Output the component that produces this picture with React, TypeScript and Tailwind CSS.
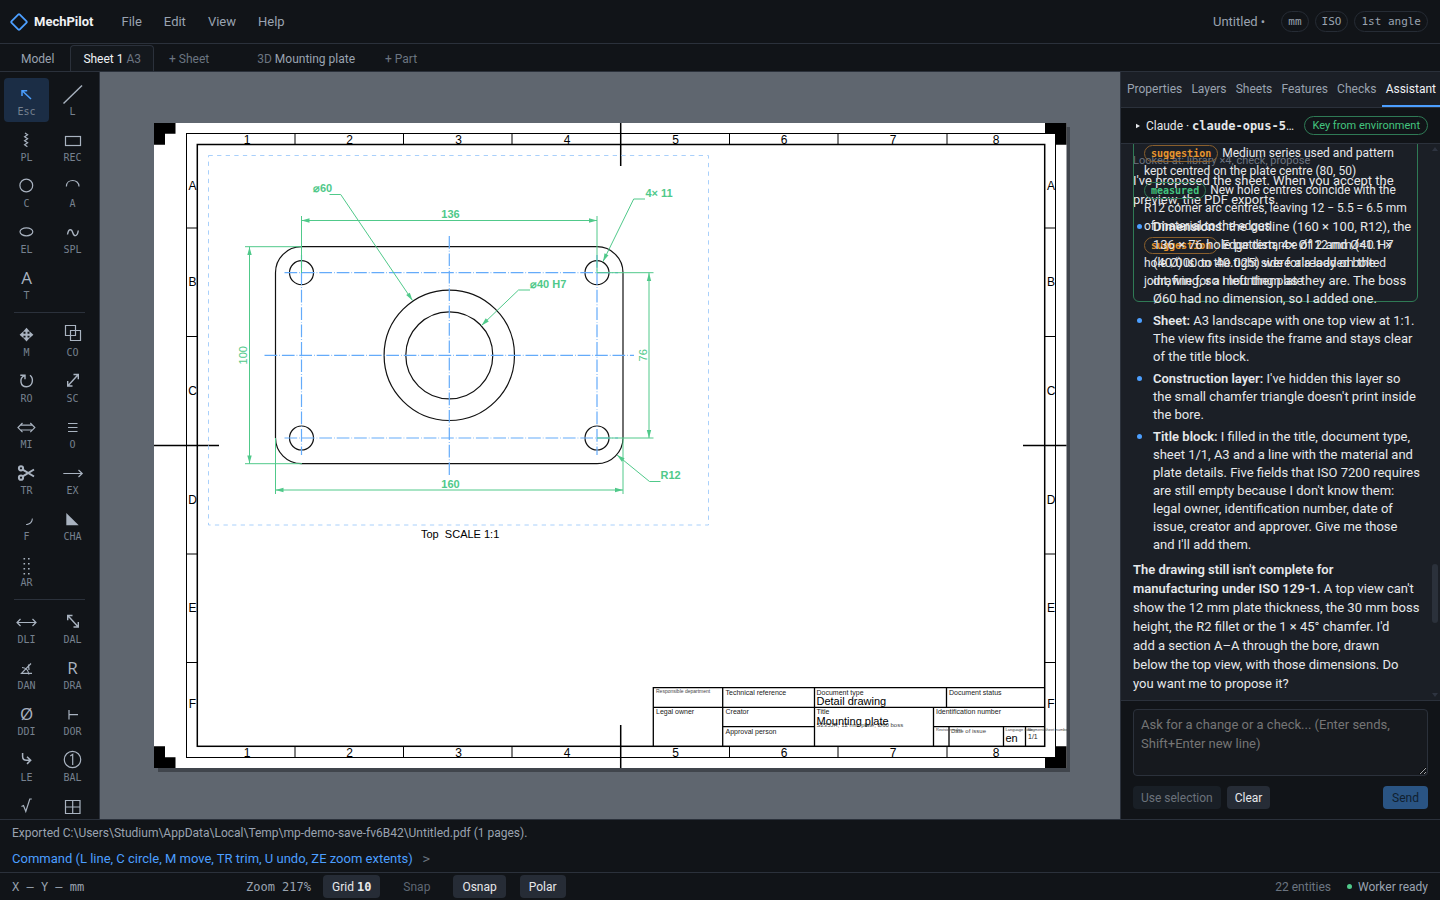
import { ReactNode } from "react";

const MONO = "font-['DejaVu_Sans_Mono','Liberation_Mono',monospace]";

const stroke = {
  fill: "none",
  stroke: "currentColor",
  strokeWidth: 1.2,
};

interface Tool {
  key: string;
  title: string;
  icon: ReactNode;
  unlabelled?: boolean;
}

function Glyph({ children }: { children: string }) {
  return (
    <text x="12.5" y="18" textAnchor="middle" className="fill-current font-['Open_Sans',sans-serif] text-[17px]">
      {children}
    </text>
  );
}

const drawTools: Tool[] = [
  { key: "Esc", title: "Select", icon: <path {...stroke} strokeWidth={1.5} d="M17 17 8.5 9M8 14V8.8h5.2" /> },
  { key: "L", title: "Line", icon: <path {...stroke} strokeWidth={1.4} d="M3.5 21.5 22 3.5" /> },
  { key: "PL", title: "Polyline", icon: <path {...stroke} d="M11 5l2.6 1.8-3 2 3 2-3 2 3 2-3 2 2.8 1.9" /> },
  { key: "REC", title: "Rectangle", icon: <rect {...stroke} x="5.5" y="8.5" width="15" height="9" /> },
  { key: "C", title: "Circle", icon: <circle {...stroke} cx="12.3" cy="11.5" r="6.4" /> },
  { key: "A", title: "Arc", icon: <path {...stroke} d="M6.4 12.5c0-8 12.6-8 12.6 0" /> },
  { key: "EL", title: "Ellipse", icon: <ellipse {...stroke} cx="12.4" cy="11.8" rx="6.4" ry="4" /> },
  { key: "SPL", title: "Spline", icon: <path {...stroke} strokeWidth={1.4} d="M7.5 14.5c1-6 4-6 5.3-1.8s4.5 4.2 5.5-2.2" /> },
  { key: "T", title: "Text", icon: <Glyph>A</Glyph> },
];

const modifyTools: Tool[] = [
  {
    key: "M",
    title: "Move",
    icon: (
      <g fill="currentColor">
        <path d="M12.5 4.8 16 8.8H9zM12.5 18.6 16 14.6H9zM5.6 11.7 9.5 8.2v7zM19.4 11.7 15.5 8.2v7z" />
        <path d="M11.5 8h2v8h-2zM8.5 10.7h8v2h-8z" />
      </g>
    ),
  },
  { key: "CO", title: "Copy", icon: <path {...stroke} d="M5.5 2.5h10v10h-10zM10.5 7.5h10v10h-10z" /> },
  { key: "RO", title: "Rotate", icon: <path {...stroke} strokeWidth={1.4} d="M6.3 6.3H11v4M10.500 6.600C5 9 6 17.700 12.500 17.700S20 9.500 16 6.300" /> },
  { key: "SC", title: "Scale", icon: <path {...stroke} strokeWidth={1.4} d="M8 16.8 18 5.8M13.5 5.5h4.8v4.8M7.7 12v5h4.8" /> },
  { key: "MI", title: "Mirror", icon: <path {...stroke} d="M6 10.2h12.8M6 15h12.8M8.5 8 4 12.6l4.5 4.6M16.3 8l4.5 4.6-4.5 4.6" /> },
  { key: "O", title: "Offset", icon: <path {...stroke} d="M8 8.5h9.5M8 12.5h9.5M8 16.5h9.5" /> },
  {
    key: "TR",
    title: "Trim",
    icon: (
      <g {...stroke} strokeWidth={2}>
        <circle cx="7" cy="7.3" r="2.1" />
        <circle cx="7" cy="16.7" r="2.1" />
        <path d="M8.7 8.7 20 15.5M8.7 15.3 20 8.5" />
      </g>
    ),
  },
  { key: "EX", title: "Extend", icon: <path {...stroke} d="M3.3 12.5H22M18.500 9l3.7 3.5-3.7 3.5" /> },
  { key: "F", title: "Fillet", icon: <path fill="currentColor" d="M18.8 11.5c0 4-2.5 6.5-6.8 6.5v-.8c3.500-.4 5.600-2.400 5.900-5.700z" /> },
  { key: "CHA", title: "Chamfer", icon: <path fill="currentColor" d="M6.3 6v12.2h12.4z" /> },
  {
    key: "AR",
    title: "Array",
    icon: <path fill="currentColor" d="M9.5 5h1.6v1.6H9.5zM14 5h1.6v1.6H14zM9.5 10h1.6v1.6H9.5zM14 10h1.6v1.6H14zM9.5 15h1.6v1.6H9.5zM14 15h1.6v1.6H14zM9.5 20h1.6v1.6H9.5zM14 20h1.6v1.6H14z" />,
  },
];

const annotateTools: Tool[] = [
  { key: "DLI", title: "Linear dimension", icon: <path {...stroke} d="M3 12.5h19M6.5 9 3 12.5 6.5 16M18.5 9l3.5 3.5-3.5 3.5" /> },
  { key: "DAL", title: "Aligned dimension", icon: <path {...stroke} strokeWidth={1.4} d="M8 5.8 18 16.8M12.5 5.5H7.7v4.8M18.3 12v5h-4.8" /> },
  { key: "DAN", title: "Angular dimension", icon: <path {...stroke} d="M17 7.5 7.5 17.3H18M8 11.5c4 .3 6.5 3 6.8 7M14.5 8.5l.5 5.5" /> },
  { key: "DRA", title: "Radius dimension", icon: <Glyph>R</Glyph> },
  { key: "DDI", title: "Diameter dimension", icon: <Glyph>Ø</Glyph> },
  { key: "DOR", title: "Ordinate dimension", icon: <path {...stroke} d="M9 8v9.5M9 12.6h9" /> },
  { key: "LE", title: "Leader", icon: <path {...stroke} strokeWidth={1.5} d="M8.6 5v3.5c0 2.5 1.5 3.8 4 3.8h3.8M13 8.7l3.7 3.6-3.7 3.6" /> },
  {
    key: "BAL",
    title: "Balloon",
    icon: (
      <g {...stroke}>
        <circle cx="12.5" cy="11.5" r="8.2" />
        <path d="M10.3 8 12.7 6.3V17" />
      </g>
    ),
  },
  { key: "SF", title: "Surface texture", unlabelled: true, icon: <path {...stroke} d="M7.5 12.5l2-1 2.3 6 4-12.5h2" /> },
  { key: "TB", title: "Table", unlabelled: true, icon: <path {...stroke} d="M5.5 6.5h14.5v13H5.5zM12.7 6.5v13M5.5 13h14.5" /> },
];

function ToolGroup({ tools, active }: { tools: Tool[]; active?: string }) {
  return (
    <div className="grid shrink-0 grid-cols-2 gap-x-px gap-y-0.5">
      {tools.map((tool) => (
        <button
          key={tool.key}
          type="button"
          title={tool.title}
          className={`flex h-11 flex-col items-center rounded pt-1 ${
            tool.key === active ? "bg-[#1b2d45] text-[#4c9fff]" : "text-[#a9b3c0]"
          }`}
        >
          <svg width="25" height="24" viewBox="0 0 25 24" className="shrink-0">
            {tool.icon}
          </svg>
          {!tool.unlabelled && <span className={`${MONO} text-[10px] leading-[11px] text-[#76818f]`}>{tool.key}</span>}
        </button>
      ))}
    </div>
  );
}

function Toolbar() {
  return (
    <nav aria-label="Tools" className="flex w-[100px] shrink-0 flex-col gap-1.5 overflow-hidden border-r border-[#2b313b] pt-1.5 pr-1 pl-1">
      <ToolGroup tools={drawTools} active="Esc" />
      <hr className="mx-2.5 shrink-0 border-[#2b313b]" />
      <ToolGroup tools={modifyTools} />
      <hr className="mx-2.5 shrink-0 border-[#2b313b]" />
      <ToolGroup tools={annotateTools} />
    </nav>
  );
}

/* Arrow tip at x,y pointing along angle (degrees, 0 = right) */
function Arrow({ x, y, angle }: { x: number; y: number; angle: number }) {
  return <path d="M0 0-8-2.2V2.2z" fill="#50c98a" transform={`translate(${x} ${y}) rotate(${angle})`} />;
}

const columnTicks = [295, 403.5, 512, 729.5, 838, 947];
const rowTicks = [228, 336.5, 554, 662.5];
const columnLabels = [247, 349.5, 458.5, 567, 675.5, 784, 893, 996];
const rowLabels: [string, number][] = [["A", 190], ["B", 286], ["C", 395], ["D", 504], ["E", 612], ["F", 708]];
const holes = [[301.5, 272.7], [597, 272.7], [301.5, 438], [597, 438]];

const titleLabels: [string, number, number][] = [
  ["Technical reference", 725.5, 695],
  ["Document type", 816.5, 695],
  ["Document status", 949, 695],
  ["Legal owner", 656, 714],
  ["Creator", 725.5, 714],
  ["Title", 816.5, 714],
  ["Identification number", 936, 714],
  ["Approval person", 725.5, 734],
];

function Sheet() {
  return (
    <svg
      viewBox="100 72 1020 747"
      className="h-full w-full font-['Liberation_Sans',Arial,sans-serif]"
      role="img"
      aria-label="Sheet 1, top view of the mounting plate"
    >
      <rect x="158" y="127" width="912" height="645" fill="#40454c" />
      <rect x="154" y="123" width="912.5" height="645" fill="#fff" />

      {/* trimming marks */}
      <g fill="#000">
        <path d="M154 123h21.5v10.7H165v11H154z" />
        <path d="M1066.5 123H1045v10.7h10.7v11h10.8z" />
        <path d="M154 768h21.5v-10.7H165v-11H154z" />
        <path d="M1066.5 768H1045v-10.7h10.7v-11h10.8z" />
      </g>

      {/* frame and centring marks */}
      <g fill="none" stroke="#000">
        <rect x="186.5" y="133.5" width="869" height="624" />
        <rect x="197.3" y="144.5" width="847.4" height="601.8" strokeWidth="1.5" />
        {columnTicks.map((x) => (
          <path key={x} d={`M${x} 134v10.5M${x} 746.5v11`} />
        ))}
        {rowTicks.map((y) => (
          <path key={y} d={`M186.5 ${y}h11M1045 ${y}h10.5`} />
        ))}
        <path strokeWidth="1.5" d="M620.7 123v43M620.7 725v43M154 445.5h65M1023 445.5h43.5" />
      </g>
      <g className="text-[12px]" textAnchor="middle">
        {columnLabels.map((x, i) => (
          <g key={x}>
            <text x={x} y="143.5">{i + 1}</text>
            <text x={x} y="756.5">{i + 1}</text>
          </g>
        ))}
        {rowLabels.map(([name, y]) => (
          <g key={name}>
            <text x="192.5" y={y}>{name}</text>
            <text x="1051" y={y}>{name}</text>
          </g>
        ))}
      </g>

      {/* view boundary */}
      <rect x="208.5" y="155.5" width="500" height="369.5" fill="none" stroke="#a9d0fb" strokeDasharray="4.3 4.3" />

      {/* plate, boss, bore and bolt holes */}
      <g fill="none" stroke="#111" strokeWidth="1.2">
        <rect x="275.5" y="246.7" width="347.5" height="217" rx="26" />
        <circle cx="449.3" cy="355.3" r="65.2" />
        <circle cx="449.3" cy="355.3" r="43.5" />
        {holes.map(([x, y]) => (
          <circle key={`${x}-${y}`} cx={x} cy={y} r="12" />
        ))}
      </g>

      <path
        d="M264.5 355.3H634M449.3 236v239M284.5 272.7H618M284.5 438H618M301.5 255v200M597 255v200"
        fill="none"
        stroke="#64abfa"
        strokeWidth="1.2"
        strokeDasharray="12.7 2 .7 2"
      />

      {/* dimensions */}
      <path
        d="M301.5 216v57M597 216v57M301.5 220.5H597M275.5 438v56M623 438v56M275.5 490H623M245 246.7h57M245 463.7h57M249.5 246.7v217M597 272.7h56.5M597 438h56.5M649 272.7V438M329.5 194.5h11.2L412.5 300.5M645 199h-11.3L603 261.5M530 290h-11.5L481.5 325.5M660.5 481.5h-11L617 455"
        fill="none"
        stroke="#50c98a"
      />
      <Arrow x={301.5} y={220.5} angle={180} />
      <Arrow x={597} y={220.5} angle={0} />
      <Arrow x={275.5} y={490} angle={180} />
      <Arrow x={623} y={490} angle={0} />
      <Arrow x={249.5} y={247} angle={-90} />
      <Arrow x={249.5} y={463.5} angle={90} />
      <Arrow x={649} y={273} angle={-90} />
      <Arrow x={649} y={438} angle={90} />
      <Arrow x={412.5} y={300.5} angle={56} />
      <Arrow x={603} y={261.5} angle={116} />
      <Arrow x={481.5} y={325.5} angle={136} />
      <Arrow x={617} y={455} angle={219} />
      <g fill="#50c98a" className="text-[11px] font-bold">
        <text x="313" y="192">⌀60</text>
        <text x="645.5" y="197">4× 11</text>
        <text x="530" y="288">⌀40 H7</text>
        <text x="450.5" y="218" textAnchor="middle">136</text>
        <text x="450.5" y="488" textAnchor="middle">160</text>
        <text x="660.5" y="479">R12</text>
        <text transform="translate(247 355.3) rotate(-90)" textAnchor="middle" className="font-normal">100</text>
        <text transform="translate(647 355.3) rotate(-90)" textAnchor="middle" className="font-normal">76</text>
      </g>
      <text x="421" y="538" className="text-[11px] whitespace-pre">{"Top  SCALE 1:1"}</text>

      {/* title block */}
      <path
        d="M653.3 746.3V687.7H1044.7M653.3 707.3H1044.7M722.7 726.7H814.5M933.5 726.7H1044.7M722.7 687.7V746.3M814.5 687.7V746.3M946.5 687.7V707.3M933.5 707.3V746.3M949 726.7V746.3M1003.5 726.7V746.3M1025.5 726.7V746.3"
        fill="none"
        stroke="#000"
        strokeWidth="1.3"
      />
      <g fill="#222">
        {titleLabels.map(([label, x, y]) => (
          <text key={label} x={x} y={y} className="text-[7px]">{label}</text>
        ))}
        <text x="1028" y="739" className="text-[7px]">1/1</text>
      </g>
      <g fill="#444" className="text-[5px]">
        <text x="656" y="693">Responsible department</text>
        <text x="816.5" y="727" className="text-[6px]">S235JR, 12 mm plate, Ø60 boss</text>
        <text x="951" y="733" className="text-[6px]">Date of issue</text>
        <text x="936" y="731" className="text-[4px]">Revision index</text>
        <text x="1005.5" y="731" className="text-[4px]">Language code</text>
        <text x="1027.5" y="731" className="text-[4px]">Segment/sheet number</text>
      </g>
      <g className="text-[11px]">
        <text x="816.5" y="705">Detail drawing</text>
        <text x="816.5" y="725">Mounting plate</text>
        <text x="1005.5" y="742">en</text>
      </g>
    </svg>
  );
}

const panelTabs = ["Properties", "Layers", "Sheets", "Features", "Checks", "Assistant"];

function Tag({ kind }: { kind: "suggestion" | "measured" }) {
  const tone = kind === "suggestion" ? "border-[#8a5f2c] text-[#e8962e]" : "border-[#2f7a55] text-[#43c47f]";
  return (
    <span className={`${MONO} ${tone} mt-px mr-1 inline-block rounded-full border px-1.5 align-top text-[10px] leading-[15px] font-bold`}>
      {kind}
    </span>
  );
}

function Bullet({ children }: { children: ReactNode }) {
  return (
    <li className="relative pl-5">
      <span className="absolute top-1.5 left-1 size-[5px] rounded-full bg-[#4c9fff]" />
      {children}
    </li>
  );
}

function Conversation() {
  return (
    <div className="flex min-h-0 flex-1 bg-[#1b1f26]">
      <div className="relative min-w-0 flex-1 overflow-hidden pl-3 text-[13px] leading-[19px] whitespace-nowrap">
        <p className="pt-2 text-[11px] leading-[18px] text-[#6b7480]">Looked at: library ×4, check, propose</p>
        <p className="mt-px">
          I've proposed the sheet. When you accept the
          <br />
          preview, the PDF exports.
        </p>
        <div className="absolute -top-3 left-3 flex w-[285px] flex-col gap-px rounded-md border border-[#2f7a55] px-2.5 py-[11px] text-[12px] leading-[18px]">
          <p>
            <Tag kind="suggestion" />
            Medium series used and pattern
            <br />
            kept centred on the plate centre (80, 50)
          </p>
          <p>
            <Tag kind="measured" />
            New hole centres coincide with the
            <br />
            R12 corner arc centres, leaving 12 − 5.5 = 6.5 mm
            <br />
            of material to the edges
          </p>
          <p>
            <Tag kind="suggestion" />
            Edge distance of 12 mm (≈1.1 ×
            <br />
            hole Ø) is on the tight side for a loaded bolted
            <br />
            joint, fine for a mounting plate
          </p>
        </div>
        <ul className="mt-[9px] flex flex-col gap-1 leading-[18px]">
          <Bullet>
            <b className="font-semibold">Dimensions:</b> the outline (160 × 100, R12), the
            <br />
            136 × 76 hole pattern, 4× Ø12 and Ø40 H7
            <br />
            (40.000 to 40.025) were already on the
            <br />
            drawing, so I left them as they are. The boss
            <br />
            Ø60 had no dimension, so I added one.
          </Bullet>
          <Bullet>
            <b className="font-semibold">Sheet:</b> A3 landscape with one top view at 1:1.
            <br />
            The view fits inside the frame and stays clear
            <br />
            of the title block.
          </Bullet>
          <Bullet>
            <b className="font-semibold">Construction layer:</b> I've hidden this layer so
            <br />
            the small chamfer triangle doesn't print inside
            <br />
            the bore.
          </Bullet>
          <Bullet>
            <b className="font-semibold">Title block:</b> I filled in the title, document type,
            <br />
            sheet 1/1, A3 and a line with the material and
            <br />
            plate details. Five fields that ISO 7200 requires
            <br />
            are still empty because I don't know them:
            <br />
            legal owner, identification number, date of
            <br />
            issue, creator and approver. Give me those
            <br />
            and I'll add them.
          </Bullet>
        </ul>
        <p className="mt-1.5">
          <b className="font-semibold">
            The drawing still isn't complete for
            <br />
            manufacturing under ISO 129-1.
          </b>{" "}
          A top view can't
          <br />
          show the 12 mm plate thickness, the 30 mm boss
          <br />
          height, the R2 fillet or the 1 × 45° chamfer. I'd
          <br />
          add a section A–A through the bore, drawn
          <br />
          below the top view, with those dimensions. Do
          <br />
          you want me to propose it?
        </p>
      </div>
      <div aria-hidden="true" className="flex w-2.5 shrink-0 flex-col items-center py-[3px] text-[#2e3440]">
        <svg width="6" height="4" viewBox="0 0 6 4" fill="currentColor">
          <path d="M0 4 3 0l3 4z" />
        </svg>
        <div className="flex flex-1 flex-col">
          <div className="flex-1" />
          <div className="mb-[70px] h-[59px] w-1.5 rounded-full bg-[#2b313b]" />
        </div>
        <svg width="6" height="4" viewBox="0 0 6 4" fill="currentColor">
          <path d="M0 0l3 4 3-4z" />
        </svg>
      </div>
    </div>
  );
}

function SidePanel() {
  return (
    <aside className="flex w-80 shrink-0 flex-col border-l border-[#2b313b]">
      <div role="tablist" className="flex h-9 shrink-0 justify-between border-b border-[#2b313b] bg-[#1b1f26] pl-0.5 text-[12px]">
        {panelTabs.map((tab) => (
          <button
            key={tab}
            type="button"
            role="tab"
            aria-selected={tab === "Assistant"}
            className={
              tab === "Assistant"
                ? "border-b-2 border-[#4c9fff] px-1 text-[#f0f2f5]"
                : "border-b-2 border-transparent px-1 text-[#9aa3b0]"
            }
          >
            {tab}
          </button>
        ))}
      </div>
      <div className="flex h-9 shrink-0 items-center border-b border-[#2b313b] px-3 text-[12px]">
        <button type="button" className="flex min-w-0 flex-1 items-center text-left">
          <svg width="13" height="8" viewBox="0 0 13 8" className="shrink-0">
            <path d="M3 1.8v4.4L7 4z" fill="currentColor" />
          </svg>
          <span className="whitespace-nowrap">
            Claude · <b className={MONO}>claude-opus-5</b>…
          </span>
        </button>
        <span className="shrink-0 rounded-full border border-[#2f7a55] px-[7px] text-[11px] leading-[17px] whitespace-nowrap text-[#43c47f]">
          Key from environment
        </span>
      </div>
      <Conversation />
      <form className="flex shrink-0 flex-col gap-2.5 border-t border-[#2b313b] px-3 pt-2 pb-2.5">
        <textarea
          aria-label="Message"
          placeholder="Ask for a change or a check... (Enter sends, Shift+Enter new line)"
          className="block h-[67px] w-full rounded border border-[#2b313b] bg-[#16191e] px-[7px] py-[5px] text-[13px] leading-[19px] placeholder:text-[#757575]"
        />
        <div className="flex gap-1.5 text-[12px]">
          <button type="button" disabled className="h-[23px] rounded bg-[#191f26] px-2 text-[#6b727b]">Use selection</button>
          <button type="button" className="h-[23px] rounded bg-[#262c36] px-2">Clear</button>
          <button type="submit" disabled className="ml-auto h-[23px] rounded bg-[#2a5483] px-[9px] text-[#10202f]">Send</button>
        </div>
      </form>
    </aside>
  );
}

export default function App() {
  return (
    <div className="flex h-screen flex-col overflow-hidden bg-[#111418] font-[Roboto,'Open_Sans',sans-serif] text-[#e6e8eb]">
      <header className="flex h-11 shrink-0 items-center border-b border-[#2b313b] px-3 text-[13px]">
        <svg width="18" height="18" viewBox="0 0 18 18" className="-ml-0.5 shrink-0">
          <rect x="3.2" y="3.2" width="11.6" height="11.6" rx="1.2" transform="rotate(45 9 9)" fill="none" stroke="#4c9fff" strokeWidth="1.8" />
        </svg>
        <h1 className="ml-1.5 text-[13px] font-bold text-[#f0f2f5]">MechPilot</h1>
        <nav className="ml-7 flex gap-[22px] text-[#9aa3b0]">
          <button type="button">File</button>
          <button type="button">Edit</button>
          <button type="button">View</button>
          <button type="button">Help</button>
        </nav>
        <span className="mr-4 ml-auto text-[#9aa3b0]">Untitled •</span>
        <div className={`${MONO} flex gap-1.5 text-[11px] leading-[19px] text-[#9aa3b0]`}>
          <span className="rounded-full border border-[#262c35] px-1.5">mm</span>
          <span className="rounded-full border border-[#262c35] px-1.5">ISO</span>
          <span className="rounded-full border border-[#262c35] px-1.5">1st angle</span>
        </div>
      </header>

      <div role="tablist" className="flex h-7 shrink-0 items-stretch border-b border-[#2b313b] pl-2 text-[12px] text-[#9aa3b0]">
        <button type="button" role="tab" className="px-[13px] pt-0.5">Model</button>
        <button type="button" role="tab" aria-selected="true" className="mt-px ml-[3px] rounded-t border border-b-0 border-[#2b313b] bg-[#14181d] px-3 text-[#f0f2f5]">
          Sheet 1 <span className="text-[#6b7480]">A3</span>
        </button>
        <button type="button" className="ml-[3px] px-3 pt-0.5 text-[#6b7480]">+ Sheet</button>
        <button type="button" role="tab" className="ml-6 px-3 pt-0.5">
          <span className="text-[#6b7480]">3D</span> Mounting plate
        </button>
        <button type="button" className="ml-1.5 px-3 pt-0.5 text-[#6b7480]">+ Part</button>
      </div>

      <div className="flex min-h-0 flex-1">
        <Toolbar />
        <main className="min-w-0 flex-1 bg-[#5f666f]">
          <Sheet />
        </main>
        <SidePanel />
      </div>

      <section aria-label="Command line" className="flex h-[53px] shrink-0 flex-col border-t border-[#2b313b] px-3 text-[12px]">
        <p className="pt-1 leading-[18px] text-[#9aa3b0]">Exported C:\Users\Studium\AppData\Local\Temp\mp-demo-save-fv6B42\Untitled.pdf (1 pages).</p>
        <label className="mt-[7px] flex items-center gap-2.5 text-[13px] leading-[20px] text-[#4c9fff]">
          Command (L line, C circle, M move, TR trim, U undo, ZE zoom extents)
          <span className={`${MONO} text-[12px] text-[#6b7480]`}>&gt;</span>
          <input type="text" className="min-w-0 flex-1 bg-transparent outline-none" />
        </label>
      </section>

      <footer className="flex h-7 shrink-0 items-center border-t border-[#2b313b] px-3 text-[12px] text-[#9aa3b0]">
        <span className={`${MONO} w-[234px]`}>X — Y — mm</span>
        <span className={`${MONO} w-[77px]`}>Zoom 217%</span>
        <div className="flex gap-3.5">
          <button type="button" className="h-[23px] rounded bg-[#262c36] px-[9px] text-[#e6e8eb]">
            Grid <b className={MONO}>10</b>
          </button>
          <button type="button" className="h-[23px] px-[9px] text-[#5f6874]">Snap</button>
          <button type="button" className="h-[23px] rounded bg-[#262c36] px-[9px] text-[#e6e8eb]">Osnap</button>
          <button type="button" className="h-[23px] rounded bg-[#262c36] px-[9px] text-[#e6e8eb]">Polar</button>
        </div>
        <span className="ml-auto text-[#6b7480]">22 entities</span>
        <span className="ml-4 size-[5px] rounded-full bg-[#50c98a]" />
        <span className="ml-1.5">Worker ready</span>
      </footer>
    </div>
  );
}
